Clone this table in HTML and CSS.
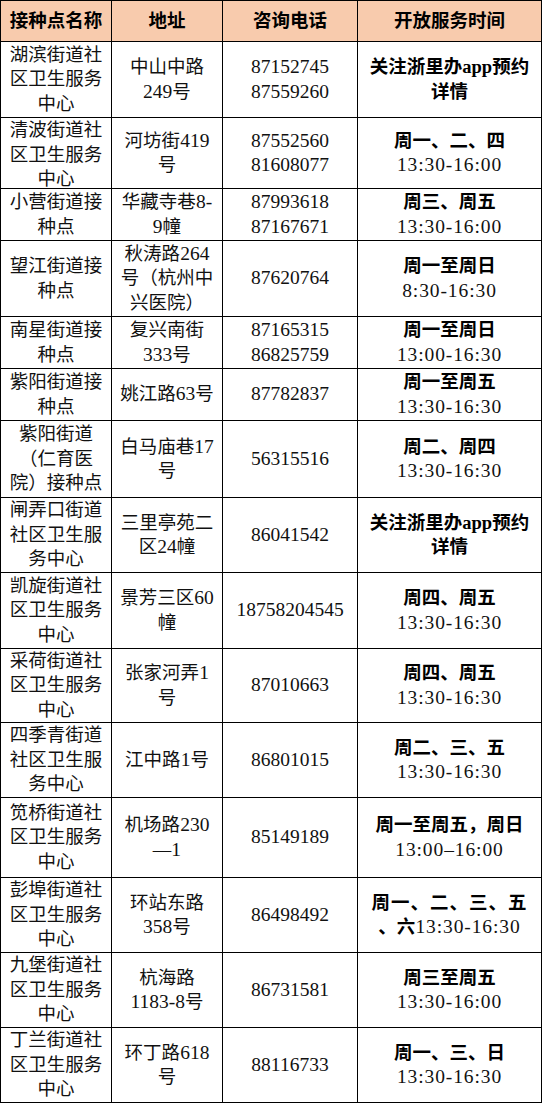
FILE: index.html
```html
<!DOCTYPE html>
<html lang="zh-CN">
<head>
<meta charset="utf-8">
<title>接种点</title>
<link rel="stylesheet" href="styles.css">
</head>
<body>
<div class="sheet">
  <div class="row head r41">
    <div class="c"><p>接种点名称</p></div>
    <div class="c"><p>地址</p></div>
    <div class="c"><p>咨询电话</p></div>
    <div class="c"><p>开放服务时间</p></div>
  </div>
  <div class="row r76">
    <div class="c"><p>湖滨街道社<br>区卫生服务<br>中心</p></div>
    <div class="c"><p>中山中路<br><span class="n">249</span>号</p></div>
    <div class="c"><p class="n">87152745<br>87559260</p></div>
    <div class="c"><p class="b">关注浙里办app预约<br>详情</p></div>
  </div>
  <div class="row r71">
    <div class="c top"><p>清波街道社<br>区卫生服务<br>中心</p></div>
    <div class="c"><p>河坊街<span class="n">419</span><br>号</p></div>
    <div class="c"><p class="n">87552560<br>81608077</p></div>
    <div class="c"><p><b>周一、二、四</b><br><span class="n tm">13:30-16:00</span></p></div>
  </div>
  <div class="row r52">
    <div class="c"><p>小营街道接<br>种点</p></div>
    <div class="c"><p>华藏寺巷<span class="n">8-</span><br><span class="n">9</span>幢</p></div>
    <div class="c"><p class="n">87993618<br>87167671</p></div>
    <div class="c"><p><b>周三、周五</b><br><span class="n tm">13:30-16:00</span></p></div>
  </div>
  <div class="row r76">
    <div class="c"><p>望江街道接<br>种点</p></div>
    <div class="c"><p>秋涛路<span class="n">264</span><br>号（杭州中<br>兴医院）</p></div>
    <div class="c"><p class="n">87620764</p></div>
    <div class="c"><p><b>周一至周日</b><br><span class="n tm">8:30-16:30</span></p></div>
  </div>
  <div class="row r52">
    <div class="c"><p>南星街道接<br>种点</p></div>
    <div class="c"><p>复兴南街<br><span class="n">333</span>号</p></div>
    <div class="c"><p class="n">87165315<br>86825759</p></div>
    <div class="c"><p><b>周一至周日</b><br><span class="n tm">13:00-16:30</span></p></div>
  </div>
  <div class="row r52">
    <div class="c"><p>紫阳街道接<br>种点</p></div>
    <div class="c"><p>姚江路<span class="n">63</span>号</p></div>
    <div class="c"><p class="n">87782837</p></div>
    <div class="c"><p><b>周一至周五</b><br><span class="n tm">13:30-16:30</span></p></div>
  </div>
  <div class="row r77">
    <div class="c"><p>紫阳街道<br>（仁育医<br>院）接种点</p></div>
    <div class="c"><p>白马庙巷<span class="n">17</span><br>号</p></div>
    <div class="c"><p class="n">56315516</p></div>
    <div class="c"><p><b>周二、周四</b><br><span class="n tm">13:30-16:30</span></p></div>
  </div>
  <div class="row r75">
    <div class="c"><p>闸弄口街道<br>社区卫生服<br>务中心</p></div>
    <div class="c"><p>三里亭苑二<br>区<span class="n">24</span>幢</p></div>
    <div class="c"><p class="n">86041542</p></div>
    <div class="c"><p class="b">关注浙里办app预约<br>详情</p></div>
  </div>
  <div class="row r76">
    <div class="c"><p>凯旋街道社<br>区卫生服务<br>中心</p></div>
    <div class="c"><p>景芳三区<span class="n">60</span><br>幢</p></div>
    <div class="c"><p class="n">18758204545</p></div>
    <div class="c"><p><b>周四、周五</b><br><span class="n tm">13:30-16:30</span></p></div>
  </div>
  <div class="row r74">
    <div class="c"><p>采荷街道社<br>区卫生服务<br>中心</p></div>
    <div class="c"><p>张家河弄<span class="n">1</span><br>号</p></div>
    <div class="c"><p class="n">87010663</p></div>
    <div class="c"><p><b>周四、周五</b><br><span class="n tm">13:30-16:30</span></p></div>
  </div>
  <div class="row r75">
    <div class="c"><p>四季青街道<br>社区卫生服<br>务中心</p></div>
    <div class="c"><p>江中路<span class="n">1</span>号</p></div>
    <div class="c"><p class="n">86801015</p></div>
    <div class="c"><p><b>周二、三、五</b><br><span class="n tm">13:30-16:30</span></p></div>
  </div>
  <div class="row r80">
    <div class="c"><p>笕桥街道社<br>区卫生服务<br>中心</p></div>
    <div class="c"><p>机场路<span class="n">230</span><br>—<span class="n">1</span></p></div>
    <div class="c"><p class="n">85149189</p></div>
    <div class="c"><p><b>周一至周五，周日</b><br><span class="n tm">13:00–16:00</span></p></div>
  </div>
  <div class="row r75">
    <div class="c"><p>彭埠街道社<br>区卫生服务<br>中心</p></div>
    <div class="c"><p>环站东路<br><span class="n">358</span>号</p></div>
    <div class="c"><p class="n">86498492</p></div>
    <div class="c"><p><b class="wide">周一、二、三、五</b><br><b>、六</b><span class="n tm">13:30-16:30</span></p></div>
  </div>
  <div class="row r75">
    <div class="c"><p>九堡街道社<br>区卫生服务<br>中心</p></div>
    <div class="c"><p>杭海路<br><span class="n">1183-8</span>号</p></div>
    <div class="c"><p class="n">86731581</p></div>
    <div class="c"><p><b>周三至周五</b><br><span class="n tm">13:30-16:00</span></p></div>
  </div>
  <div class="row r75">
    <div class="c"><p>丁兰街道社<br>区卫生服务<br>中心</p></div>
    <div class="c"><p>环丁路<span class="n">618</span><br>号</p></div>
    <div class="c"><p class="n">88116733</p></div>
    <div class="c"><p><b>周一、三、日</b><br><span class="n tm">13:30-16:30</span></p></div>
  </div>
</div>
</body>
</html>
```

FILE: styles.css
```css
html, body {
  margin: 0;
  padding: 0;
  background: #ffffff;
}

.sheet {
  width: 542px;
  box-sizing: border-box;
  border-left: 1px solid #000;
  border-top: 1px solid #000;
  font-family: "Liberation Serif", "Noto Sans CJK SC", serif;
  font-size: 18.5px;
  color: #111;
}

.row {
  display: grid;
  grid-template-columns: 111px 111px 135px 184px;
  grid-template-rows: minmax(0, 1fr);
  box-sizing: border-box;
  border-bottom: 1px solid #000;
}

.r41 { height: 41px; }
.r52 { height: 52px; }
.r71 { height: 71px; }
.r74 { height: 74px; }
.r75 { height: 75px; }
.r76 { height: 76px; }
.r77 { height: 77px; }
.r80 { height: 80px; }

.c {
  box-sizing: border-box;
  border-right: 1px solid #000;
  display: flex;
  flex-direction: column;
  justify-content: center;
  align-items: center;
  overflow: hidden;
  min-height: 0;
}

.c.top {
  justify-content: flex-start;
}

.c p {
  margin: 0;
  text-align: center;
  line-height: 24.5px;
  white-space: nowrap;
}

.head {
  background: #f8cbad;
}

.head .c p {
  font-weight: 700;
  color: #000;
}

.n {
  font-family: "Liberation Serif", serif;
  font-size: 19.5px;
}

.tm {
  letter-spacing: 0.9px;
}

.c .b, .c b {
  font-weight: 700;
  color: #000;
}

.wide {
  letter-spacing: 1px;
}
```
